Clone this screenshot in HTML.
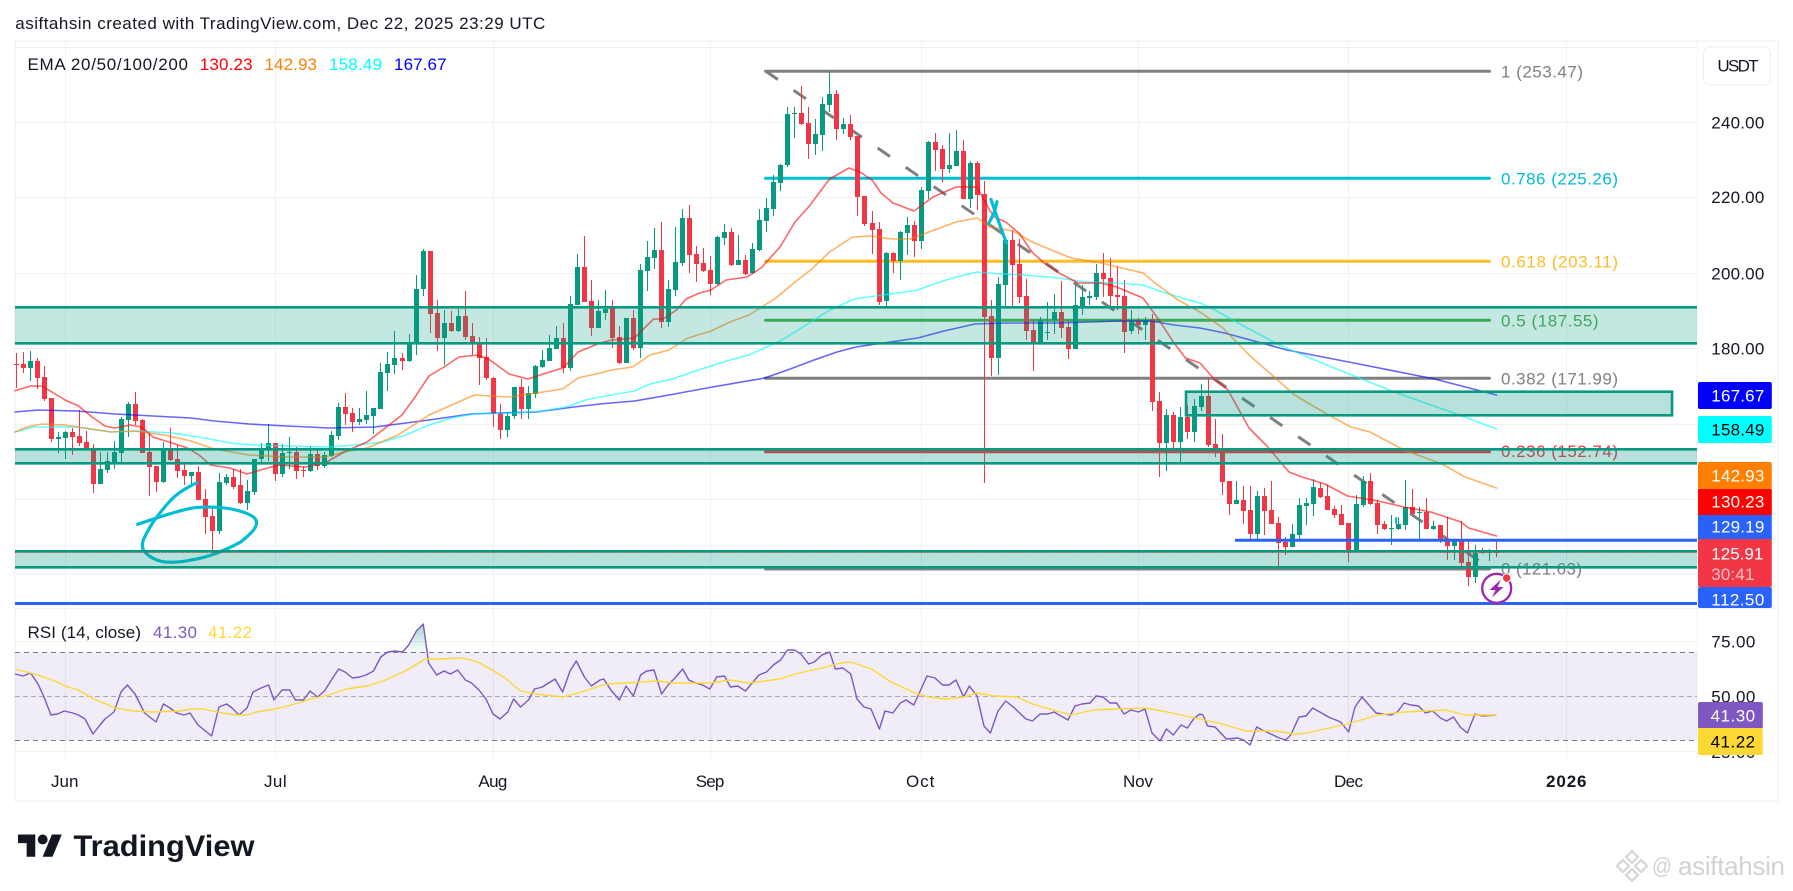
<!DOCTYPE html>
<html lang="en"><head><meta charset="utf-8"><title>TradingView chart</title>
<style>
html,body{margin:0;padding:0;background:#fff;width:1793px;height:891px;overflow:hidden}
svg{display:block}
text{font-family:"Liberation Sans",Arial,sans-serif;font-size:17px;fill:#131722}
</style></head><body>
<svg width="1793" height="891" viewBox="0 0 1793 891" xmlns="http://www.w3.org/2000/svg">
<rect width="1793" height="891" fill="#fff"/>
<text x="15.3" y="29" textLength="530" lengthAdjust="spacing">asiftahsin created with TradingView.com, Dec 22, 2025 23:29 UTC</text>
<rect x="15" y="41" width="1763" height="760" fill="#fff" stroke="#f3f4f6" stroke-width="1.5"/>
<!-- grid -->
<path d="M65.5 41V758M275.5 41V758M493.5 41V758M710.5 41V758M921.5 41V758M1138.5 41V758M1348.5 41V758M1566.5 41V758" stroke="#f0f1f5" stroke-width="1" fill="none"/>
<path d="M15 47.5H1697M15 122.5H1697M15 197.5H1697M15 273.5H1697M15 348.5H1697M15 424.5H1697M15 499.5H1697M15 574.5H1697M15 608.5H1778M15 641.5H1697M15 751.5H1697" stroke="#f0f1f5" stroke-width="1" fill="none"/>
<path d="M1697 41V758" stroke="#f4f5f8" stroke-width="1"/>
<!-- fib lines -->
<g fill="none" stroke-width="3" stroke-linecap="round">
<path d="M765.5 71.3H1489.5" stroke="#808080"/>
<path d="M765.5 178.3H1489.5" stroke="#00bcd4"/>
<path d="M765.5 261.3H1489.5" stroke="#fbbc25"/>
<path d="M765.5 320.3H1489.5" stroke="#4caf50"/>
<path d="M765.5 378.3H1489.5" stroke="#808080"/>
<path d="M765.5 451.7H1489.5" stroke="#f23645"/>
<path d="M765.5 569H1489.5" stroke="#808080"/>
</g>
<text x="1501" y="77.5" textLength="82" style="fill:#808080">1 (253.47)</text>
<text x="1501" y="184.3" textLength="117" style="fill:#00bcd4">0.786 (225.26)</text>
<text x="1501" y="267.5" textLength="117" style="fill:#fbbc25">0.618 (203.11)</text>
<text x="1501" y="326.3" textLength="97.6" style="fill:#4caf50">0.5 (187.55)</text>
<text x="1501" y="384.3" textLength="117" style="fill:#808080">0.382 (171.99)</text>
<text x="1501" y="457" textLength="117" style="fill:#f23645">0.236 (152.74)</text>
<text x="1501" y="574.7" textLength="81" style="fill:#808080">0 (121.63)</text>
<!-- fib trend line -->
<path d="M765.5 71L1489.5 568" stroke="#808080" stroke-width="3" stroke-dasharray="15 19" fill="none"/>
<!-- candle wicks green -->
<path fill="none" stroke="#089981" stroke-width="1" d="M30.5 351V381M58.5 432V453M65.5 431V459M100.5 452V484M107.5 452V473M114.5 441V469M121.5 417V462M128.5 402V437M163.5 442V483M191.5 472V486M219.5 473V534M226.5 474V485M247.5 480V510M254.5 459V495M261.5 443V462M268.5 424V461M282.5 444V477M289.5 437V469M310.5 446V472M324.5 452V468M331.5 431V457M338.5 403V440M359.5 408V425M366.5 391V424M373.5 408V434M380.5 363V409M387.5 352V391M394.5 331V374M409.5 334V362M416.5 275V355M423.5 249V296M444.5 310V365M458.5 309V332M507.5 412V437M514.5 387V419M528.5 386V419M535.5 365V398M542.5 350V368M549.5 335V361M556.5 326V349M570.5 296V371M577.5 254V305M598.5 300V328M605.5 290V320M626.5 318V363M640.5 264V358M647.5 241V291M654.5 228V269M668.5 280V327M675.5 227V296M682.5 209V266M717.5 236V285M724.5 224V245M738.5 235V265M752.5 243V274M759.5 209V251M766.5 198V232M773.5 175V216M780.5 164V191M787.5 107V167M794.5 107V138M815.5 119V155M822.5 97V151M829.5 71V112M843.5 118V134M886.5 252V306M900.5 231V280M907.5 217V255M921.5 187V249M928.5 141V199M949.5 133V173M956.5 130V166M970.5 161V208M998.5 277V375M1005.5 239V306M1040.5 317V343M1047.5 302V340M1054.5 294V334M1075.5 285V349M1082.5 285V315M1089.5 291V305M1096.5 264V300M1131.5 310V334M1145.5 317V340M1166.5 409V471M1180.5 407V462M1194.5 399V442M1201.5 384V411M1236.5 481V504M1257.5 491V539M1292.5 524V547M1299.5 498V539M1306.5 498V525M1313.5 479V516M1356.5 495V550M1363.5 476V507M1391.5 515V545M1398.5 517V530M1405.5 480V530M1419.5 507V539M1433.5 521V530M1454.5 539V560M1475.5 545V583M1489.5 549V561"/>
<!-- candle bodies green -->
<path fill="none" stroke="#089981" stroke-width="5" d="M30.5 361V368M58.5 437V439M65.5 432V438M100.5 469V484M107.5 461V470M114.5 452V463M121.5 419V453M128.5 404V420M163.5 450V482M191.5 472V476M219.5 482V531M226.5 477V483M247.5 491V503M254.5 459V492M261.5 449V459M268.5 443V449M282.5 453V474M289.5 452V453M310.5 454V471M324.5 455V466M331.5 435V456M338.5 407V436M359.5 419V422M366.5 415V420M373.5 408V416M380.5 372V409M387.5 364V373M394.5 358V365M409.5 343V361M416.5 289V343M423.5 251V289M444.5 323V338M458.5 316V331M507.5 416V430M514.5 387V416M528.5 393V409M535.5 366V394M542.5 360V367M549.5 348V361M556.5 338V349M570.5 304V368M577.5 267V305M598.5 311V328M605.5 309V313M626.5 318V363M640.5 270V348M647.5 257V271M654.5 250V258M668.5 289V322M675.5 262V290M682.5 218V263M717.5 237V284M724.5 232V238M738.5 260V265M752.5 249V273M759.5 220V250M766.5 208V221M773.5 182V209M780.5 165V183M787.5 114V165M794.5 113V114M815.5 134V144M822.5 104V135M829.5 94V105M843.5 124V129M886.5 253V301M900.5 232V261M907.5 225V233M921.5 190V241M928.5 142V191M949.5 165V169M956.5 151V166M970.5 163V199M998.5 284V358M1005.5 240V285M1040.5 320V342M1047.5 332V333M1054.5 312V320M1075.5 305V349M1082.5 297V306M1089.5 296V298M1096.5 273V297M1131.5 322V331M1145.5 321V325M1166.5 415V443M1180.5 417V442M1194.5 406V432M1201.5 396V407M1236.5 500V504M1257.5 496V534M1292.5 534V547M1299.5 505V535M1306.5 503V506M1313.5 487V504M1356.5 504V550M1363.5 481V505M1391.5 528V529M1398.5 524V529M1405.5 507V525M1419.5 512V513M1433.5 526V529M1454.5 540V546M1475.5 553V577M1489.5 552V553"/>
<!-- candle wicks red -->
<path fill="none" stroke="#f23645" stroke-width="1" d="M16.5 353V388M23.5 352V373M37.5 358V389M44.5 366V401M51.5 398V442M72.5 428V455M79.5 410V446M86.5 431V450M93.5 444V493M135.5 392V425M142.5 419V453M149.5 433V496M156.5 466V492M170.5 428V461M177.5 445V478M184.5 464V485M198.5 466V500M205.5 489V534M212.5 508V553M233.5 469V489M240.5 469V504M275.5 443V481M296.5 447V479M303.5 467V477M317.5 448V470M345.5 393V425M352.5 408V432M402.5 353V370M430.5 251V333M437.5 300V351M451.5 311V332M465.5 291V340M472.5 323V355M479.5 337V385M486.5 338V380M493.5 377V427M500.5 404V439M521.5 379V419M563.5 323V373M584.5 236V302M591.5 280V336M612.5 300V348M619.5 326V364M633.5 310V350M661.5 222V328M689.5 205V273M696.5 246V282M703.5 248V272M710.5 256V295M731.5 228V266M745.5 255V275M801.5 86V125M808.5 107V159M836.5 90V140M850.5 115V140M857.5 136V216M864.5 196V226M872.5 211V254M879.5 222V305M893.5 252V273M914.5 221V257M935.5 133V171M942.5 145V182M963.5 140V199M977.5 161V210M984.5 181V483M991.5 300V376M1012.5 230V306M1019.5 239V303M1026.5 279V340M1033.5 320V371M1061.5 281V338M1068.5 320V359M1103.5 253V297M1110.5 258V309M1117.5 266V310M1124.5 280V353M1138.5 318V334M1152.5 314V411M1159.5 392V477M1173.5 412V448M1187.5 405V439M1208.5 378V447M1215.5 419V457M1222.5 434V495M1229.5 481V515M1243.5 486V524M1250.5 486V541M1264.5 488V535M1271.5 481V524M1278.5 517V567M1285.5 537V555M1320.5 483V498M1327.5 485V510M1334.5 506V518M1341.5 505V525M1348.5 523V562M1370.5 473V505M1377.5 500V534M1384.5 521V530M1412.5 489V514M1426.5 498V529M1440.5 525V543M1447.5 517V560M1461.5 521V569M1468.5 539V586M1482.5 548V554M1496.5 541V557"/>
<!-- candle bodies red -->
<path fill="none" stroke="#f23645" stroke-width="5" d="M16.5 364V365M23.5 364V368M37.5 361V378M44.5 377V399M51.5 398V439M72.5 432V437M79.5 436V443M86.5 442V449M93.5 449V484M135.5 404V421M142.5 420V453M149.5 452V467M156.5 466V482M170.5 450V460M177.5 459V471M184.5 470V476M198.5 472V500M205.5 499V517M212.5 516V531M233.5 477V487M240.5 485V503M275.5 443V474M296.5 452V471M303.5 470V471M317.5 454V466M345.5 407V414M352.5 413V422M402.5 358V361M430.5 251V314M437.5 313V338M451.5 323V331M465.5 316V337M472.5 336V344M479.5 343V358M486.5 357V378M493.5 378V414M500.5 413V430M521.5 387V409M563.5 338V368M584.5 267V302M591.5 301V328M612.5 307V338M619.5 337V363M633.5 318V348M661.5 250V322M689.5 218V255M696.5 254V264M703.5 263V271M710.5 270V284M731.5 232V265M745.5 260V274M801.5 113V124M808.5 123V144M836.5 94V129M850.5 124V137M857.5 136V197M864.5 196V224M872.5 223V230M879.5 229V302M893.5 253V261M914.5 225V241M935.5 142V150M942.5 149V169M963.5 151V199M977.5 163V195M984.5 194V317M991.5 316V358M1012.5 240V265M1019.5 264V297M1026.5 296V331M1033.5 330V342M1061.5 312V328M1068.5 327V349M1103.5 273V279M1110.5 278V296M1117.5 295V297M1124.5 296V332M1138.5 321V325M1152.5 319V402M1159.5 401V443M1173.5 415V442M1187.5 417V432M1208.5 396V445M1215.5 444V449M1222.5 448V482M1229.5 481V504M1243.5 500V511M1250.5 510V534M1264.5 496V511M1271.5 510V524M1278.5 523V543M1285.5 542V547M1320.5 488V497M1327.5 496V510M1334.5 509V515M1341.5 514V525M1348.5 523V550M1370.5 481V504M1377.5 503V525M1384.5 524V529M1412.5 507V514M1426.5 512V529M1440.5 525V540M1447.5 539V546M1461.5 540V563M1468.5 562V577M1482.5 552V553M1496.5 552V553"/>
<!-- EMA lines -->
<g fill="none" stroke-width="1.6" stroke-linejoin="round" stroke-linecap="round">
<polyline stroke="#0000ff" stroke-opacity=".6" points="15,412 38,410 76.5,411 115,414 153,416 191,418 214,421 249,424 287,426 329,428 375,427 406,423 429,420 471,414 497.5,413 536,412 574,407 600,404 634.4,401 669,395 707,388 764.6,378 787.5,370 814,360 837,352 856,347 917.6,338 944,331 975,324 1005.7,323 1059,323 1120.5,321 1151,321 1174,325 1200,328 1224.6,333 1287,350 1359,364 1434.5,379 1496.5,395"/>
<polyline stroke="#00ffff" stroke-opacity=".6" points="15,432 34,427 76.5,427 111,432 138,431 172,433 199,437 230,443 252.6,445 287,446 329,447 356,445 383,442 406,435 429,425 451.6,418 474.5,414 513,413 543,411 566,407 585.5,400 600,397 634.4,391 650,384 672.7,379 692,372 711,366 730,360 749,355 764.6,348 780,341 795,332 814,320 830,310 854.5,299 875.5,296 898.5,293 917.6,290 937,283 956,277 977,272 1002,274 1025,275 1059,278 1086,282 1116.6,283 1143,285 1162.5,292 1185.5,299 1200,303 1215,310 1238,323 1279.4,345 1310,358 1359,378 1400,394 1465,417 1496.5,429"/>
<polyline stroke="#ff8000" stroke-opacity=".6" points="15,432 27,427 42,424 65,425 84,428 111,432 134,431 164.5,435 191,441 214,449 249,455 287,457 325,457 344,452 367,448 398,435 429,415 451.6,405 474.5,395 509,397 536,393 562.6,389 578,378 600,373 611.5,370 632.5,367 650,355 669,350 688,338 711,331 730,322 749,315 768,303 776,298 795,282 810.5,270 829.6,252 852.6,237 872,236 891,239 910,239 929,232 956,222 977,218 990,227 1013,231 1032,242 1071,258 1101,263 1143,273 1155,283 1178,300 1200,312 1223,328 1249,355 1272,375 1294.5,395 1328.6,415 1351,427 1370,432 1404,450 1442,464 1465,477 1496.5,488"/>
<polyline stroke="#ff0000" stroke-opacity=".6" points="15,390.7 30.6,386 42,386 53.6,393 65,400 78.5,406 92,417 105,426 115,428 130,425 141.6,427 153,437 172,443 187.5,448 199,455 210.5,465 230,468 247,474 264,469 279,465 306,467 325,463 344,452 367,442 386.5,427 402,415 415,397 429,376 444,367 459,357 478,355 490,360 509,374 528,379 543,374 563,368 578,352 600,343 612,340 634.4,338 653.6,319 663,319 676.5,310 686,299 699.5,293 711,290 726,280 747,277 761,268 780,247 795,222 808.6,207 829.6,179 849,168 860,172 872,180 881,193 893,203 914,211 933,197 956,187 977,187 988.5,208 994,217 1005.7,222 1019,233 1032,252 1044,263 1059,273 1078,283 1101,283 1116.6,287 1143,298 1159,320 1174,343 1185.5,358 1200,363 1215,380 1228,390 1249,428 1266,445 1289,472 1302,477 1325,484 1347.5,496 1378,501 1404,507 1431,512 1461,522 1468.5,528 1496.5,536"/>
</g>
<!-- cyan drawings -->
<g fill="none" stroke="#00bcd4" stroke-width="3.2" stroke-linejoin="round" stroke-linecap="round">
<path d="M137.8 524.3C147 521 157 518 169 514C180 511 190 507.5 200 507.3C215 506.5 232 508 245 512.7C252 515.5 256 518 256.5 522C257 527 253 532 241 541.7C232 547 225 549.5 218 552.7C206 557 198 559 191 560C182 562 172 562.5 165 562C156 561 148 556 144 551C141.5 547 142 543 144 538.3C148 530 152 523 157 517C162 510 168 503 172 499C180 491 190 486 197 482.7"/>
<path d="M991 199.5L998 220L1006.4 243M997 201.7L994 213L988.4 224"/>
<path d="M1396 523V518" stroke-width="2"/>
</g>
<!-- zones -->
<g fill="#089981">
<rect x="15" y="307.3" width="1682" height="36" fill-opacity=".24"/>
<rect x="15" y="449.3" width="1682" height="14" fill-opacity=".29"/>
<rect x="15" y="551.3" width="1682" height="16" fill-opacity=".29"/>
<rect x="1186" y="391.7" width="486" height="23.6" fill-opacity=".29"/>
</g>
<g fill="none" stroke="#089981" stroke-width="2.6">
<path d="M15 307.3H1697M15 343.3H1697M15 449.3H1697M15 463.3H1697M15 551.3H1697M15 567.3H1697"/>
<rect x="1186" y="391.7" width="486" height="23.6"/>
</g>
<!-- price lines -->
<path d="M15 552.5H1697" stroke="#f23645" stroke-width="1" stroke-dasharray="1 2" fill="none"/>
<path d="M1235 540.3H1697M15 603.5H1697" stroke="#2962ff" stroke-width="3" fill="none"/>
<!-- flash icon -->
<circle cx="1496.7" cy="588.3" r="14.5" fill="#fff" stroke="#9c27b0" stroke-width="2.3"/>
<path d="M1501 579.5L1489.5 590H1495.5L1492 597.5L1503.5 587H1497.5Z" fill="#9c27b0"/>
<circle cx="1506.7" cy="578" r="4.2" fill="#f23645" stroke="#fff" stroke-width="1"/>
<!-- legend -->
<text x="27.5" y="70" textLength="160.5">EMA 20/50/100/200</text>
<text x="199.8" y="70" textLength="52.8" style="fill:#ff0000">130.23</text>
<text x="264.5" y="70" textLength="52.5" style="fill:#ff8000">142.93</text>
<text x="329" y="70" textLength="53" style="fill:#00ffff">158.49</text>
<text x="394" y="70" textLength="52.6" style="fill:#0000ff">167.67</text>
<!-- RSI -->
<rect x="15" y="652.3" width="1682" height="88" fill="#7e57c2" fill-opacity=".115"/>
<path d="M15 652.5H1697M15 740.5H1697" stroke="#787b86" stroke-width="1" stroke-dasharray="5 4" fill="none"/>
<path d="M15 696.5H1697" stroke="#a9a9b2" stroke-width="1" stroke-dasharray="5 3" fill="none"/>
<defs><linearGradient id="ob" x1="0" y1="0" x2="0" y2="1"><stop offset="0" stop-color="#089981" stop-opacity=".38"/><stop offset="1" stop-color="#089981" stop-opacity=".02"/></linearGradient></defs>
<polygon points="405.6,652 408.7,645 416.4,631 423.3,624 427,652" fill="url(#ob)"/>
<polyline fill="none" stroke="#7e57c2" stroke-width="1.4" stroke-linejoin="round" points="15,674 23,676 30.6,673 38,684 44,697 51,715 57.4,714 64.3,711 72.7,713 78.5,715 85,719 93,734 100,725 105,719 114,712 121,692 127.4,685 135,694 144.6,713 156,722 163.4,704 170,708 176.8,713 183.7,715 190,713 198,725 211.6,736 219,707 226.5,704 232,708 239,715 247,708 253,692 261,688 268.6,685 274,700 282,690 289.7,690 295.4,700 303.5,700 310,691 317.6,697 324.5,691 331.4,680 338.7,669 345,672 352.5,678 359.7,677 366,675 373.5,671 380.8,657 387.7,652 394.6,651 402.6,652 408.7,645 416.4,631 423.3,624 428.6,663 436.7,675 444,671 450.4,674 457.7,670 465.4,680 471.5,683 479,690 486,699 493,714 500,719 507.8,712 513.6,699 520.5,707 528.5,700 534.6,689 542.3,687 555,679 562.6,692 570,671 576.3,661 584.4,677 591.3,686 600,680 603.8,679 611.5,691 619.5,700 626,686 633.3,696 640.6,675 646.7,671 654,670 661.6,694 668,685 675,678 682.7,669 688.8,680 695.7,683 702.6,685 709.8,689 716.7,677 724.4,676 730.5,687 737.8,686 745.4,691 759,675 766.5,672 773.4,665 780.6,660 787.5,650 794.4,650 801,654 808.6,664 814.3,662 822,655 829.6,652 835.4,669 843,668 850.7,674 857,699 864,707 871,709 879.4,729 885,711 892.8,713 900.4,703 906,700 913.8,705 927,676 935,678 942.5,685 949,685 956,680 963.6,697 969.3,686 977,696 984,726 990.4,733 998,711 1005.7,701 1013.3,707 1026,719 1032.4,721 1040,714 1047.8,714 1054,712 1061,716 1068,720 1075,706 1082,704 1090,703 1096,696 1103,697 1110,703 1116.6,703 1124,714 1131,710 1138.5,712 1145,709 1152,733 1160,741 1166.4,729 1173.3,735 1181,725 1187.4,728 1194.3,718 1200,714 1203,715 1207.6,726 1215,727 1226.5,739 1238,738 1243.5,740 1250,745 1256.7,727 1264.3,731 1279.4,738 1285.5,740 1290.8,735 1299,717 1306,716 1312.7,708 1328.6,717 1340.7,722 1348.6,732 1355,707 1362,697 1376,713 1383.4,714 1391,715 1397.4,712 1404,703 1411,705 1418.6,706 1425.4,713 1432.6,711 1440.5,718 1446.6,721 1453.4,717 1460.2,727 1467.4,733 1475,714 1481.8,716 1496.5,715"/>
<polyline fill="none" stroke="#fdd835" stroke-width="1.4" stroke-linejoin="round" points="15,669 38,675 57.4,682 65,686 78.5,690 92,698 115,708 134,711 153,712 180,711 191,709 203,709 222,713 237,715 247,715 256.4,712 279.4,708 302,702 310,699 329,695 346,689 367,686 383,681 405.6,671 425,659 440,659 463,658 478,662 493.7,671 505,678 520.5,691 536,694 562.6,697 578,693 600,686 607.7,684 626.8,683 657.4,681 674.6,683 711,683 730,680 749,683 780,679 795,674 822,668 841,663 850.7,662 871.7,669 891,682 917.6,694 929,697 946,699 963.6,697 977,693 994,696 1017,697 1032.4,704 1070.7,715 1093.7,710 1116.6,709 1145,708 1162.5,711 1200,719 1222.7,724 1245.4,731 1275.6,731 1294.5,734 1306,733 1347.5,724 1377.8,715 1404,712 1445.8,710 1464.7,715 1496.5,715"/>
<text x="27.5" y="638" textLength="113.5">RSI (14, close)</text>
<text x="153" y="638" textLength="44" style="fill:#7e57c2">41.30</text>
<text x="208" y="638" textLength="44" style="fill:#fdd835">41.22</text>
<!-- USDT -->
<rect x="1703.5" y="47" width="67" height="38" rx="6" fill="#fff" stroke="#eceef2" stroke-width="1"/>
<text x="1717.4" y="71.7" textLength="41.2">USDT</text>
<!-- Axis labels -->
<text x="1711.3" y="128.5" textLength="53">240.00</text>
<text x="1711.3" y="203.2" textLength="53">220.00</text>
<text x="1711.3" y="279.5" textLength="53">200.00</text>
<text x="1711.3" y="354.5" textLength="53">180.00</text>
<text x="1711.3" y="647.7" textLength="44">75.00</text>
<text x="1711.3" y="702.3" textLength="44">50.00</text>
<text x="1711.3" y="758" textLength="44">25.00</text>
<!-- Tags -->
<rect x="1698" y="382" width="73.8" height="27" rx="2" fill="#0000ff"/>
<text x="1711.3" y="401.7" textLength="53" style="fill:#fff">167.67</text>
<rect x="1698" y="416" width="73.8" height="27" rx="2" fill="#00ffff"/>
<text x="1711.3" y="435.7" textLength="53" style="fill:#000">158.49</text>
<rect x="1698" y="462" width="73.8" height="27" rx="2" fill="#ff8000"/>
<text x="1711.3" y="481.7" textLength="53" style="fill:#fff">142.93</text>
<rect x="1698" y="489" width="73.8" height="26" fill="#ff0000"/>
<text x="1711.3" y="507.7" textLength="53" style="fill:#fff">130.23</text>
<rect x="1698" y="515" width="73.8" height="25" fill="#2962ff"/>
<text x="1711.3" y="532.7" textLength="53" style="fill:#fff">129.19</text>
<rect x="1698" y="587" width="73.8" height="21" rx="2" fill="#2962ff"/>
<text x="1711.3" y="605.3" textLength="53" style="fill:#fff">112.50</text>
<rect x="1698" y="539" width="73.8" height="48" rx="2" fill="#f23645"/>
<text x="1711.3" y="559.5" textLength="52" style="fill:#fff">125.91</text>
<text x="1711.3" y="580" textLength="43" style="fill:#fff;fill-opacity:.7">30:41</text>
<rect x="1698" y="702" width="64.8" height="26.5" rx="2" fill="#7e57c2"/>
<text x="1710.6" y="721.7" textLength="44.5" style="fill:#fff">41.30</text>
<rect x="1698" y="728" width="64.8" height="27" rx="2" fill="#fdd835"/>
<text x="1710.6" y="747.7" textLength="44.5" style="fill:#000">41.22</text>
<!-- Time axis -->
<text x="51" y="787" textLength="27.5">Jun</text>
<text x="264" y="787" textLength="22.6">Jul</text>
<text x="478.4" y="787" textLength="29">Aug</text>
<text x="695.7" y="787" textLength="28.7">Sep</text>
<text x="906" y="787" textLength="28.3">Oct</text>
<text x="1123" y="787" textLength="30">Nov</text>
<text x="1334" y="787" textLength="29">Dec</text>
<text x="1546" y="787" textLength="40.5" style="font-weight:700">2026</text>
<!-- logo -->
<g transform="translate(18 829.6) scale(1.233)" fill="#131722">
<path d="M14 22H7V11H0V4h14v18zM28 22h-8l7.5-18h8L28 22z"/>
<circle cx="20" cy="8" r="4"/>
</g>
<text x="73.5" y="856" textLength="181" lengthAdjust="spacingAndGlyphs" style="font-size:30px;font-weight:700;fill:#131722">TradingView</text>
<!-- watermark -->
<g fill="none" stroke="#d6d6d6" stroke-width="2.2" stroke-linejoin="round">
<path d="M1632 851L1638 857L1632 863L1626 857ZM1632 869L1638 875L1632 881L1626 875Z"/>
<path d="M1623 860L1629 866L1623 872L1617 866ZM1641 860L1647 866L1641 872L1635 866Z"/>
</g>
<text x="1652" y="874" textLength="20" lengthAdjust="spacingAndGlyphs" style="font-size:23px;fill:#d2d2d2">@</text>
<text x="1678" y="875" textLength="107" style="font-size:26px;fill:#d2d2d2">asiftahsin</text>
</svg>
</body></html>
